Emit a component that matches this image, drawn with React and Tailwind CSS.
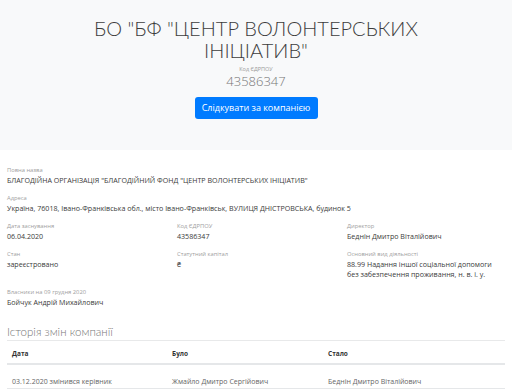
import React from "react";

function Field({ label, children }) {
  return (
    <div className="mb-[9px]">
      <div className="text-[5.8px] leading-[9px] text-[#a0a0a0]">{label}</div>
      <div className="text-[7.1px] leading-[10px] text-[#3a3a3a] whitespace-nowrap">{children}</div>
    </div>
  );
}

export default function App() {
  return (
    <div className="w-[512px] h-[389px] overflow-hidden bg-white" style={{ fontFamily: '"Open Sans", "Noto Sans", sans-serif' }}>
      <div className="h-[150px] bg-[#f8f9fa] flex flex-col items-center pt-[17px]">
        <h1 className="text-center text-[20px] leading-[22px] font-light text-[#3d3d3d] whitespace-nowrap" style={{ fontFamily: 'Lato, sans-serif' }}>
          <span className="block">БО "БФ "ЦЕНТР ВОЛОНТЕРСЬКИХ</span>
          <span className="block">ІНІЦІАТИВ"</span>
        </h1>
        <div className="mt-[4px] text-[5.5px] leading-[8px] text-[#999]">Код ЄДРПОУ</div>
        <div className="text-[13px] leading-[17px] font-light text-[#777]">43586347</div>
        <button className="mt-[7px] h-[22px] w-[123px] rounded-[3px] bg-[#007bff] text-white text-[9px] leading-[22px]">
          Слідкувати за компанією
        </button>
      </div>
      <div className="px-[7px] pt-[16px]">
        <Field label="Повна назва">
          БЛАГОДІЙНА ОРГАНІЗАЦІЯ "БЛАГОДІЙНИЙ ФОНД "ЦЕНТР ВОЛОНТЕРСЬКИХ ІНІЦІАТИВ"
        </Field>
        <Field label="Адреса">
          Україна, 76018, Івано-Франківська обл., місто Івано-Франківськ, ВУЛИЦЯ ДНІСТРОВСЬКА, будинок 5
        </Field>
        <div className="grid grid-cols-[170px_170px_1fr]">
          <Field label="Дата заснування">06.04.2020</Field>
          <Field label="Код ЄДРПОУ">43586347</Field>
          <Field label="Директор">Беднін Дмитро Віталійович</Field>
          <Field label="Стан">зареєстровано</Field>
          <Field label="Статутний капітал">₴</Field>
          <Field label="Основний вид діяльності">
            <span className="block">88.99 Надання іншої соціальної допомоги</span>
            <span className="block">без забезпечення проживання, н. в. і. у.</span>
          </Field>
        </div>
        <Field label="Власники на 09 грудня 2020">Бойчук Андрій Михайлович</Field>
        <h2 className="mt-[17px] text-[11.5px] leading-[16px] font-light text-[#777]" style={{ fontFamily: 'Lato, sans-serif' }}>Історія змін компанії</h2>
        <table className="w-full text-left border-t border-[#e8e9ea]">
          <thead>
            <tr className="border-b-2 border-[#e5e7e9]">
              <th className="pl-[5px] pt-[8px] pb-[5px] leading-[9px] w-[165px] text-[6.5px] font-bold text-[#333]">Дата</th>
              <th className="pt-[8px] pb-[5px] leading-[9px] w-[156px] text-[6.5px] font-bold text-[#333]">Було</th>
              <th className="pt-[8px] pb-[5px] leading-[9px] text-[6.5px] font-bold text-[#333]">Стало</th>
            </tr>
          </thead>
          <tbody>
            <tr className="border-b border-[#e5e7e9]">
              <td className="pl-[5px] pt-[12px] pb-[2px] leading-[9px] text-[7px] text-[#666]">03.12.2020 змінився керівник</td>
              <td className="pt-[12px] pb-[2px] leading-[9px] text-[7px] text-[#666]">Жмайло Дмитро Сергійович</td>
              <td className="pt-[12px] pb-[2px] leading-[9px] text-[7px] text-[#666]">Беднін Дмитро Віталійович</td>
            </tr>
          </tbody>
        </table>
      </div>
    </div>
  );
}
